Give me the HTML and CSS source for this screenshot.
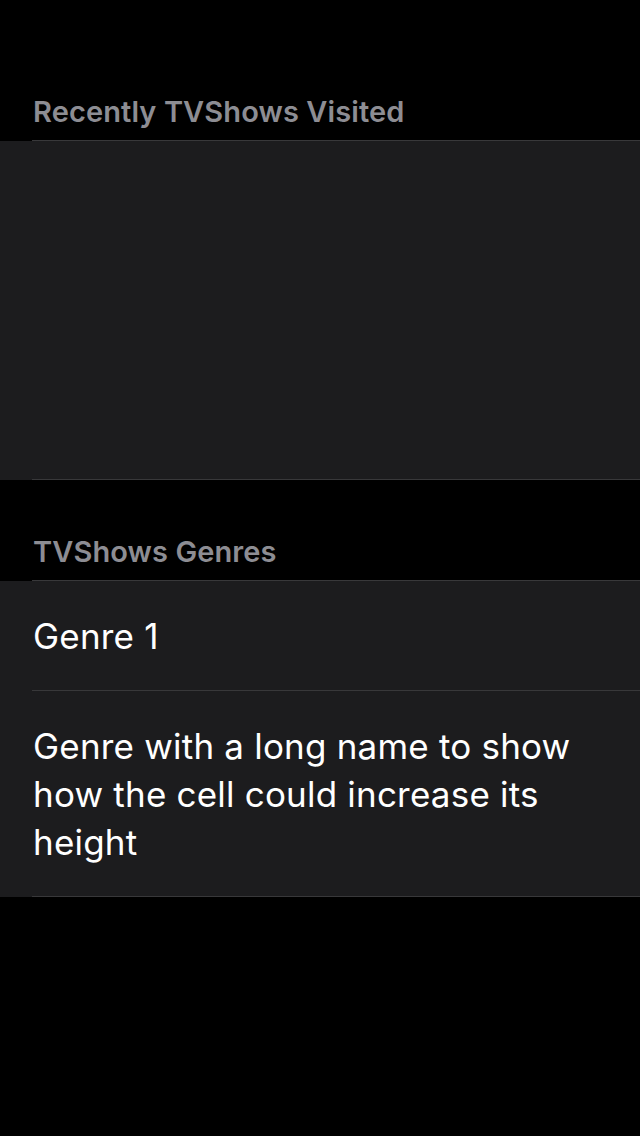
FILE: index.html
```html
<!DOCTYPE html>
<html>
<head>
<meta charset="utf-8">
<link rel="stylesheet" href="styles.css">
</head>
<body>
<main class="table">
  <section class="section section-recent">
    <header class="section-header"><h2 class="header-text">Recently TVShows Visited</h2></header>
    <div class="cells">
      <div class="cell cell-empty"><div class="cell-body"></div></div>
    </div>
  </section>
  <section class="section section-genres">
    <header class="section-header"><h2 class="header-text">TVShows Genres</h2></header>
    <div class="cells">
      <div class="cell"><div class="cell-body"><p class="cell-text">Genre 1</p></div></div>
      <div class="cell"><div class="cell-body"><p class="cell-text">Genre with a long name to show how the cell could increase its height</p></div></div>
    </div>
  </section>
</main>
</body>
</html>
```
FILE: styles.css
```css
html, body {
  margin: 0;
  padding: 0;
  background: #000;
}
body {
  width: 640px;
  min-height: 1136px;
  font-family: Inter, "Noto Sans", sans-serif;
  -webkit-font-smoothing: antialiased;
}
.table {
  display: flex;
  flex-direction: column;
}
.section-recent .section-header {
  padding-top: 94px;
}
.section-genres .section-header {
  padding-top: 54px;
}
.header-text {
  margin: 0 0 0 32px;
  padding: 0 0 10px 1px;
  font-size: 29px;
  line-height: 36px;
  font-weight: 600;
  letter-spacing: 0.1px;
  color: #8d8d93;
  border-bottom: 1px solid #38383a;
}
.cells {
  background: #1c1c1e;
}
.cell-body {
  margin-left: 32px;
  border-bottom: 1px solid #38383a;
  padding: 31px 32px 30px 1px;
}
.cell-empty .cell-body {
  height: 339px;
  padding: 0;
  box-sizing: border-box;
}
.cell-text {
  margin: 0;
  font-size: 35px;
  line-height: 48px;
  font-weight: 400;
  letter-spacing: 0.2px;
  color: #fff;
}
```
